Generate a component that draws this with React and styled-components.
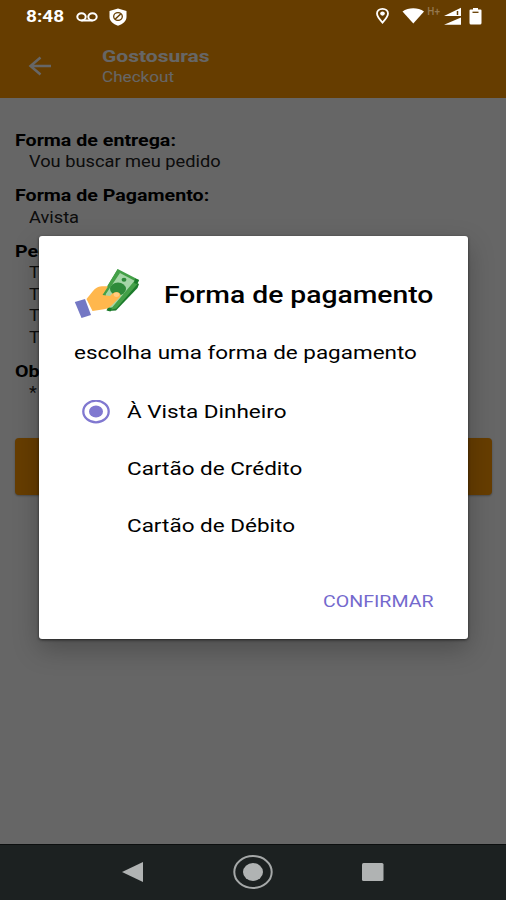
import React, { useState } from 'react';
import styled, { createGlobalStyle } from 'styled-components';

const GlobalStyle = createGlobalStyle`
  * {
    box-sizing: border-box;
  }
  body {
    margin: 0;
    font-family: Roboto, 'Liberation Sans', sans-serif;
  }
`;

const orders = ['T1', 'T2', 'T3', 'T4'];
const methods = ['À Vista Dinheiro', 'Cartão de Crédito', 'Cartão de Débito'];

const StatusIcons = () => (
  <>
    <StatusGroup>
      <Clock>
        <Text $size={17} $weight={700} $stretch={1.12}>8:48</Text>
      </Clock>
      <svg width="22" height="10" viewBox="0 0 22 10" fill="none" stroke="#fff" strokeWidth="2">
        <ellipse cx="5.5" cy="4.8" rx="4.2" ry="3.6" />
        <ellipse cx="16.5" cy="4.8" rx="4.2" ry="3.6" />
        <path d="M5.5 8.5h11" />
      </svg>
      <Shield width="18" height="18" viewBox="0 0 18 18">
        <path d="M9 .5 17.5 3v6c0 4-3.5 7-8.5 8.7C4 16 .5 13 .5 9V3z" fill="#fff" />
        <ellipse cx="9" cy="8.5" rx="4.3" ry="3.8" fill="none" stroke="#663d00" strokeWidth="1.3" />
        <path d="m6.3 11 5.4-5" stroke="#663d00" strokeWidth="1.5" />
      </Shield>
    </StatusGroup>
    <svg width="108" height="20" viewBox="0 0 108 20">
      <path
        d="M7.5 2.8c-3.300 0-5.500 2-5.500 4.800 0 3.200 5.500 9 5.500 9s5.500-5.800 5.500-9c0-2.800-2.200-4.800-5.500-4.800z"
        fill="none"
        stroke="#fff"
        strokeWidth="1.8"
      />
      <ellipse cx="7.5" cy="7.6" rx="2.3" ry="2.1" fill="#fff" />
      <path d="M27.500 5.500c6-4.300 15.500-4.300 21.500 0L38.300 17.500z" fill="#fff" />
      <path d="M86 10V1.800L69 10zM86 11.500v7.300H69z" fill="#fff" />
      <path d="M82.500 5v4" stroke="#663d00" strokeWidth="1.5" />
      <path d="M95.500 3.500h2.500V2h5v1.500h2.500q1 0 1 1V17q0 1.500-1.500 1.500h-9q-1.500 0-1.500-1.500V4.500q0-1 1-1z" fill="#fff" />
      <path d="M97.500 6.300h6" stroke="#663d00" strokeWidth="1.3" />
    </svg>
    <Network>H+</Network>
  </>
);

const MoneyHand = () => (
  <svg width="66" height="50" viewBox="0 0 66 50">
    <path d="m45 4 20 11-1.500 4L42 41.500l-8 .5z" fill="#1b7a2b" />
    <path d="m43.700 0 21.300 11-1.500 4L42 39.500 36 41l-8-15z" fill="#43a047" />
    <path d="m45 3.500 16 8.500-20.500 25.500-7 2-2-15z" fill="#a5d6a7" />
    <path d="M43.700 0 28 26l2.500 1L46 4zM62 10 38.500 38l3.500 1.500 21.500-25z" fill="#43a047" />
    <path d="m34 38 4 1.500-1.500 3-4-1zM61 9.500l4 1.500-2 4-3-1z" fill="#1b7a2b" />
    <ellipse cx="44" cy="20" rx="8" ry="6.500" fill="#2e8b3a" />
    <ellipse cx="50" cy="10.800" rx="2.400" ry="2" fill="#2e8b3a" />
    <path
      d="M12.500 30 19 22c2-2.500 4.500-4 7-4.500 2.500-.500 5.500-.500 8 0L28.500 26l7.500 1c2-2.500 4-4 7-3.800 3.500.300 4.500 3 2.500 5.300L37 37c-2 2-4 2.800-7 3.200L18.500 42z"
      fill="#ffb74d"
    />
    <ellipse cx="42.500" cy="25.600" rx="2.800" ry="2.400" fill="#ffcc80" />
    <path d="M.8 33 11 30l6 16-9.500 3z" fill="#7478c4" />
  </svg>
);

const App = () => {
  const [selected, setSelected] = useState(methods[0]);

  return (
    <Screen>
      <GlobalStyle />
      <Toolbar>
        <svg width="24" height="22" viewBox="0 0 24 22" fill="none" stroke="#fff" strokeWidth="2.5">
          <path d="M23 11H2.500M12.500 2.500 2.500 11l10 8.500" />
        </svg>
        <Titles>
          <Text $size={17} $weight={700} $line={21} $stretch={1.235}>Gostosuras</Text>
          <Text $size={14.4} $line={22} $stretch={1.19}>Checkout</Text>
        </Titles>
      </Toolbar>
      <Content>
        <Section>
          <Text $size={16.4} $weight={700} $stretch={1.198}>Forma de entrega:</Text>
          <Detail><Text $size={15.8} $stretch={1.155}>Vou buscar meu pedido</Text></Detail>
        </Section>
        <Section>
          <Text $size={16.4} $weight={700} $stretch={1.198}>Forma de Pagamento:</Text>
          <Detail><Text $size={15.8} $stretch={1.155}>Avista</Text></Detail>
        </Section>
        <Section>
          <Text $size={16.4} $weight={700} $stretch={1.198}>Pedido</Text>
          {orders.map((order) => (
            <Detail key={order}><Text $size={15.8} $stretch={1.155}>{order}</Text></Detail>
          ))}
        </Section>
        <Section>
          <Text $size={16.4} $weight={700} $stretch={1.198}>Obs:</Text>
          <Detail><Text $size={15.8} $stretch={1.155}>*</Text></Detail>
        </Section>
        <OrderButton aria-label="Finalizar" />
      </Content>
      <Scrim>
        <Dialog role="dialog">
          <DialogHeader>
            <MoneyHand />
            <Text $size={24} $weight={500} $line={30} $stretch={1.178}>Forma de pagamento</Text>
          </DialogHeader>
          <Message><Text $size={19.2} $line={26} $stretch={1.17}>escolha uma forma de pagamento</Text></Message>
          {methods.map((method) => (
            <Option key={method} onClick={() => setSelected(method)}>
              <RadioSlot>
                {selected === method && (
                  <svg width="28" height="24" viewBox="0 0 28 24">
                    <ellipse cx="14" cy="11.5" rx="12.7" ry="10.8" fill="none" stroke="#8078d0" strokeWidth="2.3" />
                    <ellipse cx="14" cy="11.5" rx="7" ry="6" fill="#8078d0" />
                  </svg>
                )}
              </RadioSlot>
              <Text $size={19.2} $line={26} $stretch={1.172}>{method}</Text>
            </Option>
          ))}
          <Actions>
            <Confirm>
              <Text $size={16.8} $line={22}>CONFIRMAR</Text>
            </Confirm>
          </Actions>
        </Dialog>
      </Scrim>
      <StatusBar><StatusIcons /></StatusBar>
      <NavBar>
        <svg width="22" height="20" viewBox="0 0 22 20"><path d="M0 10 21 0v20z" fill="#b0b3b3" /></svg>
        <svg width="40" height="36" viewBox="0 0 40 36">
          <ellipse cx="20" cy="18" rx="18.7" ry="16" fill="none" stroke="#a5a8a8" strokeWidth="2" />
          <ellipse cx="20" cy="18" rx="10" ry="9" fill="#b0b3b3" />
        </svg>
        <svg width="22" height="20" viewBox="0 0 22 20"><rect y="1" width="21.5" height="18" rx="1.5" fill="#b0b3b3" /></svg>
      </NavBar>
    </Screen>
  );
};

const Screen = styled.div`
  position: relative;
  display: flex;
  flex-direction: column;
  width: 506px;
  height: 900px;
  overflow: hidden;
  background: #fff;
`;

const Text = styled.span`
  display: block;
  width: max-content;
  font-size: ${({ $size }) => $size}px;
  font-weight: ${({ $weight }) => $weight || 400};
  line-height: ${({ $line }) => $line || 21.4}px;
  white-space: nowrap;
  transform: scaleX(${({ $stretch }) => $stretch || 1.167});
  transform-origin: left center;
`;

const Toolbar = styled.header`
  display: flex;
  align-items: center;
  height: 98px;
  padding: 33px 28px 0;
  background: #ff9800;
  color: #fff;
`;

const Titles = styled.div`
  margin-left: 50px;
  padding-top: 4px;
`;

const Content = styled.main`
  flex: 1;
  padding: 31.6px 14px 0 15px;
  color: #000;
`;

const Section = styled.section`
  margin-bottom: 12.9px;
`;

const Detail = styled.div`
  padding-left: 14px;
  color: #222;
`;

const OrderButton = styled.button`
  display: block;
  width: 100%;
  height: 57px;
  margin-top: 34px;
  border: 0;
  border-radius: 4px;
  background: #ff9800;
  box-shadow: 0 1px 2px rgba(0, 0, 0, 0.3);
`;

const Scrim = styled.div`
  position: absolute;
  inset: 0;
  padding: 236px 38px 0 39px;
  background: rgba(0, 0, 0, 0.6);
`;

const Dialog = styled.div`
  height: 403px;
  padding: 32px 34px 0 35px;
  border-radius: 3px;
  background: #fff;
  box-shadow: 0 10px 26px rgba(0, 0, 0, 0.25), 0 1px 3px rgba(0, 0, 0, 0.6);
  color: #000;
`;

const DialogHeader = styled.div`
  display: flex;
  align-items: center;
  gap: 24px;
  height: 52px;

  ${Text} {
    padding-top: 2px;
  }
`;

const Message = styled.div`
  padding-top: 20px;
`;

const Option = styled.div`
  display: flex;
  align-items: center;
  height: 57px;

  ${Message} + & {
    margin-top: 17px;
  }
`;

const RadioSlot = styled.div`
  display: flex;
  width: 53px;
  padding-left: 8px;
`;

const Actions = styled.div`
  display: flex;
  justify-content: flex-end;
  padding-top: 36px;
`;

const Confirm = styled.button`
  width: 111px;
  padding: 0;
  border: 0;
  background: none;
  color: #7469cd;
  font-family: inherit;
`;

const StatusBar = styled.div`
  position: absolute;
  top: 0;
  left: 0;
  display: flex;
  justify-content: space-between;
  align-items: center;
  width: 100%;
  height: 32px;
  padding: 0 23px 0 26px;
  color: #fff;
`;

const StatusGroup = styled.div`
  display: flex;
  align-items: center;
  padding-top: 1px;
`;

const Clock = styled.div`
  width: 50px;
`;

const Shield = styled.svg`
  margin-left: 11px;
`;

const Network = styled.span`
  position: absolute;
  right: 66px;
  top: 6px;
  font-size: 10px;
  font-weight: 500;
  color: #94784f;
`;

const NavBar = styled.nav`
  position: absolute;
  bottom: 0;
  left: 0;
  display: flex;
  justify-content: space-between;
  align-items: center;
  width: 100%;
  height: 56px;
  padding: 0 122px 2px;
  background: #1c2121;
  border-top: 1px solid #0c0f0f;
`;

export default App;
